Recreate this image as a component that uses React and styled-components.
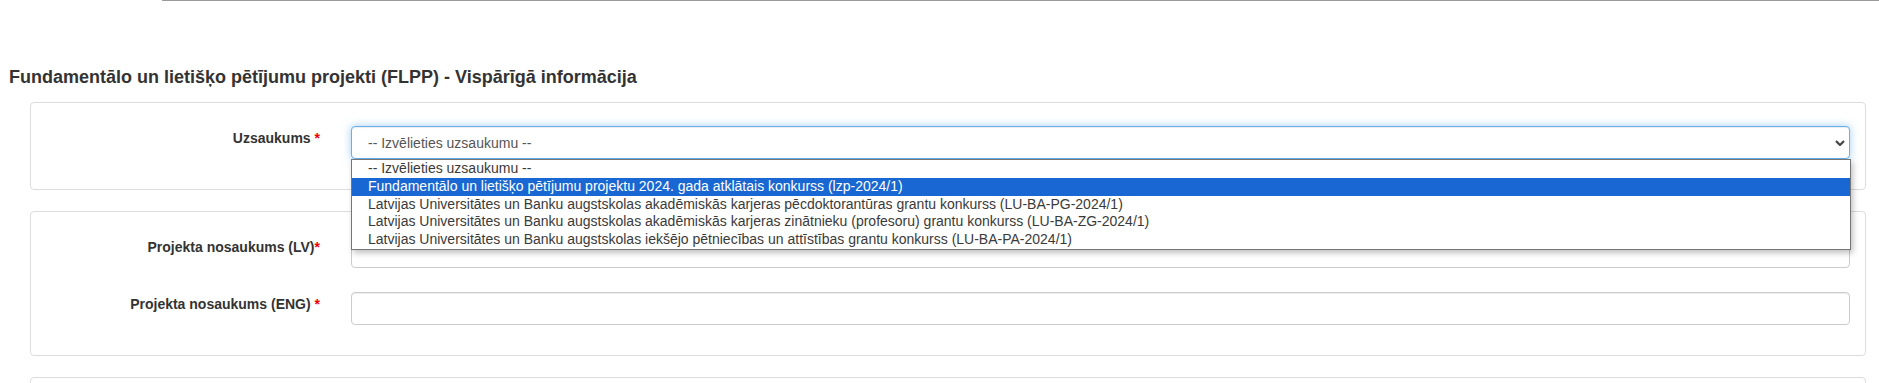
import React from "react";
import styled, { createGlobalStyle } from "styled-components";

const GlobalStyle = createGlobalStyle`
  body {
    margin: 0;
    background: #fff;
    font-family: "Liberation Sans", Arial, sans-serif;
    color: #333;
  }
`;

const options = [
  "-- Izvēlieties uzsaukumu --",
  "Fundamentālo un lietišķo pētījumu projektu 2024. gada atklātais konkurss (lzp-2024/1)",
  "Latvijas Universitātes un Banku augstskolas akadēmiskās karjeras pēcdoktorantūras grantu konkurss (LU-BA-PG-2024/1)",
  "Latvijas Universitātes un Banku augstskolas akadēmiskās karjeras zinātnieku (profesoru) grantu konkurss (LU-BA-ZG-2024/1)",
  "Latvijas Universitātes un Banku augstskolas iekšējo pētniecības un attīstības grantu konkurss (LU-BA-PA-2024/1)",
];

const App = () => {
  return (
    <>
      <GlobalStyle />
      <TabBar>
        <ActiveTab />
        <TabRest />
      </TabBar>
      <Page>
        <Heading>
          Fundamentālo un lietišķo pētījumu projekti (FLPP) - Vispārīgā informācija
        </Heading>

        <Card>
          <FormRow>
            <Label>
              Uzsaukums <Star>*</Star>
            </Label>
            <Control>
              <SelectBox>
                <span>-- Izvēlieties uzsaukumu --</span>
                <Chevron viewBox="0 0 10 6">
                  <path d="M1 1 L5 5 L9 1" />
                </Chevron>
              </SelectBox>
              <Popup>
                {options.map((o, i) => (
                  <Option key={o} selected={i === 1}>
                    {o}
                  </Option>
                ))}
              </Popup>
            </Control>
          </FormRow>
        </Card>

        <Card>
          <FormRow>
            <Label>
              Projekta nosaukums (LV)<Star>*</Star>
            </Label>
            <Control>
              <Input type="text" />
            </Control>
          </FormRow>
          <FormRow>
            <Label>
              Projekta nosaukums (ENG) <Star>*</Star>
            </Label>
            <Control>
              <Input type="text" />
            </Control>
          </FormRow>
        </Card>

        <Card />
      </Page>
    </>
  );
};

const TabBar = styled.div`
  display: flex;
  height: 1px;
`;

const ActiveTab = styled.div`
  width: 162px;
  background: #fff;
`;

const TabRest = styled.div`
  flex: 1;
  background: #9a9a9a;
`;

const Page = styled.div`
  padding: 0 13px 0 0;
`;

const Heading = styled.h3`
  margin: 66px 0 15px 9px;
  font-size: 18px;
  line-height: 20px;
  font-weight: bold;
  color: #333;
`;

const Card = styled.div`
  margin: 0 0 21px 30px;
  border: 1px solid #ddd;
  border-radius: 4px;
  padding: 23px 0 30px;
  display: flex;
  flex-direction: column;
  gap: 24px;
  min-height: 30px;
`;

const FormRow = styled.div`
  display: grid;
  grid-template-columns: 304px 1fr;
  align-items: start;
`;

const Label = styled.label`
  text-align: right;
  padding: 2px 15px 0 0;
  font-size: 14px;
  line-height: 20px;
  font-weight: bold;
  color: #333;
`;

const Star = styled.span`
  color: #e00;
`;

const Control = styled.div`
  position: relative;
  padding: 0 15px 0 16px;
`;

const SelectBox = styled.div`
  box-sizing: border-box;
  height: 33px;
  display: flex;
  align-items: center;
  justify-content: space-between;
  padding: 0 4px 0 16px;
  border: 1px solid #66afe9;
  border-radius: 4px;
  background: #fff;
  font-size: 14px;
  color: #555;
  box-shadow: inset 0 1px 1px rgba(0, 0, 0, 0.075), 0 0 8px rgba(102, 175, 233, 0.6);
`;

const Chevron = styled.svg`
  width: 10px;
  height: 6px;
  margin-top: 1px;
  fill: none;
  stroke: #444;
  stroke-width: 2.2;
`;

const Popup = styled.div`
  position: absolute;
  top: 33px;
  left: 16px;
  right: 14px;
  z-index: 5;
  background: #fff;
  border: 1px solid #767676;
  box-shadow: 2px 3px 6px rgba(0, 0, 0, 0.25);
  padding: 0;
`;

const Option = styled.div`
  height: 17.8px;
  line-height: 17.8px;
  padding-left: 16px;
  font-size: 14px;
  white-space: nowrap;
  color: ${(p) => (p.selected ? "#fff" : "#3a3a3a")};
  background: ${(p) => (p.selected ? "#1967d2" : "transparent")};
`;

const Input = styled.input`
  display: block;
  box-sizing: border-box;
  width: 100%;
  height: 33px;
  border: 1px solid #ccc;
  border-radius: 4px;
  box-shadow: inset 0 1px 1px rgba(0, 0, 0, 0.075);
  font-size: 14px;
  outline: none;
`;

export default App;
